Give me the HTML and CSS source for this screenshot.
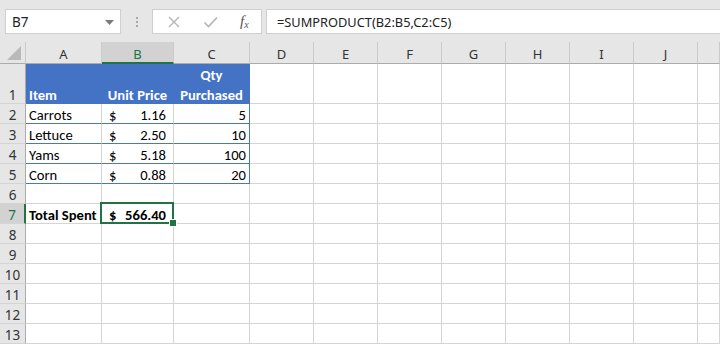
FILE: index.html
```html
<!DOCTYPE html>
<html>
<head>
<meta charset="utf-8">
<link rel="stylesheet" href="styles.css">
</head>
<body>
<div class="toolbar">
  <div class="namebox">
    <span class="nb-text">B7</span>
    <svg class="nb-arrow" width="9" height="5" viewBox="0 0 9 5"><path d="M0 0h9L4.5 5z" fill="#7a7a7a"/></svg>
  </div>
  <div class="grip"><i></i><i></i><i></i></div>
  <div class="fxbox">
    <svg width="14" height="14" viewBox="0 0 14 14"><path d="M2 2L12 12M12 2L2 12" stroke="#b4b4b4" stroke-width="1.4" fill="none"/></svg>
    <svg width="16" height="14" viewBox="0 0 16 14"><path d="M1.5 7.5L5.5 11.5L14 2.5" stroke="#b4b4b4" stroke-width="1.6" fill="none"/></svg>
    <span class="fx">f<sub>x</sub></span>
  </div>
  <div class="formula">=SUMPRODUCT(B2:B5,C2:C5)</div>
</div>
<div class="sheet">
  <div class="corner"><svg width="14" height="14" viewBox="0 0 14 14"><path d="M14 0V14H0z" fill="#b9b9b9"/></svg></div>
  <div class="ch">A</div><div class="ch sel">B</div><div class="ch">C</div><div class="ch">D</div><div class="ch">E</div><div class="ch">F</div><div class="ch">G</div><div class="ch">H</div><div class="ch">I</div><div class="ch">J</div><div class="ch"></div>

  <div class="rh">1</div>
  <div class="c th left"><span>Item</span></div><div class="c th center"><span>Unit Price</span></div><div class="c th center"><span>Qty<br>Purchased</span></div>
  <div class="c"></div><div class="c"></div><div class="c"></div><div class="c"></div><div class="c"></div><div class="c"></div><div class="c"></div><div class="c"></div>

  <div class="rh">2</div>
  <div class="c tb">Carrots</div><div class="c tb acc"><span>$</span><span>1.16</span></div><div class="c tb last num">5</div>
  <div class="c"></div><div class="c"></div><div class="c"></div><div class="c"></div><div class="c"></div><div class="c"></div><div class="c"></div><div class="c"></div>

  <div class="rh">3</div>
  <div class="c tb">Lettuce</div><div class="c tb acc"><span>$</span><span>2.50</span></div><div class="c tb last num">10</div>
  <div class="c"></div><div class="c"></div><div class="c"></div><div class="c"></div><div class="c"></div><div class="c"></div><div class="c"></div><div class="c"></div>

  <div class="rh">4</div>
  <div class="c tb">Yams</div><div class="c tb acc"><span>$</span><span>5.18</span></div><div class="c tb last num">100</div>
  <div class="c"></div><div class="c"></div><div class="c"></div><div class="c"></div><div class="c"></div><div class="c"></div><div class="c"></div><div class="c"></div>

  <div class="rh">5</div>
  <div class="c tb">Corn</div><div class="c tb acc"><span>$</span><span>0.88</span></div><div class="c tb last num">20</div>
  <div class="c"></div><div class="c"></div><div class="c"></div><div class="c"></div><div class="c"></div><div class="c"></div><div class="c"></div><div class="c"></div>

  <div class="rh">6</div>
  <div class="c"></div><div class="c"></div><div class="c"></div><div class="c"></div><div class="c"></div><div class="c"></div><div class="c"></div><div class="c"></div><div class="c"></div><div class="c"></div><div class="c"></div>

  <div class="rh sel">7</div>
  <div class="c bold">Total Spent</div><div class="c acc bold active"><span>$</span><span>566.40</span></div><div class="c"></div>
  <div class="c"></div><div class="c"></div><div class="c"></div><div class="c"></div><div class="c"></div><div class="c"></div><div class="c"></div><div class="c"></div>

  <div class="rh">8</div>
  <div class="c"></div><div class="c"></div><div class="c"></div><div class="c"></div><div class="c"></div><div class="c"></div><div class="c"></div><div class="c"></div><div class="c"></div><div class="c"></div><div class="c"></div>
  <div class="rh">9</div>
  <div class="c"></div><div class="c"></div><div class="c"></div><div class="c"></div><div class="c"></div><div class="c"></div><div class="c"></div><div class="c"></div><div class="c"></div><div class="c"></div><div class="c"></div>
  <div class="rh">10</div>
  <div class="c"></div><div class="c"></div><div class="c"></div><div class="c"></div><div class="c"></div><div class="c"></div><div class="c"></div><div class="c"></div><div class="c"></div><div class="c"></div><div class="c"></div>
  <div class="rh">11</div>
  <div class="c"></div><div class="c"></div><div class="c"></div><div class="c"></div><div class="c"></div><div class="c"></div><div class="c"></div><div class="c"></div><div class="c"></div><div class="c"></div><div class="c"></div>
  <div class="rh">12</div>
  <div class="c"></div><div class="c"></div><div class="c"></div><div class="c"></div><div class="c"></div><div class="c"></div><div class="c"></div><div class="c"></div><div class="c"></div><div class="c"></div><div class="c"></div>
  <div class="rh">13</div>
  <div class="c"></div><div class="c"></div><div class="c"></div><div class="c"></div><div class="c"></div><div class="c"></div><div class="c"></div><div class="c"></div><div class="c"></div><div class="c"></div><div class="c"></div>
</div>
</body>
</html>
```

FILE: styles.css
```css
* { box-sizing: border-box; }
html, body { margin: 0; padding: 0; background: #ffffff; }
body { width: 720px; height: 347px; overflow: hidden; }

.toolbar {
  height: 42px;
  background: #e6e6e6;
  display: flex;
  align-items: flex-start;
  padding-top: 9px;
  font-family: "Noto Sans", "Open Sans", sans-serif;
}
.namebox {
  margin-left: 5px;
  width: 116px;
  height: 25px;
  background: #fff;
  border: 1px solid #cfcfcf;
  display: flex;
  align-items: center;
  justify-content: space-between;
  padding: 0 6px 0 6px;
  font-size: 13.5px;
  color: #222;
}
.nb-arrow { margin-top: 1px; }
.grip {
  width: 31px;
  height: 25px;
  display: flex;
  flex-direction: column;
  align-items: center;
  justify-content: center;
  gap: 2px;
}
.grip i { display: block; width: 2px; height: 2px; background: #a9a9a9; }
.fxbox {
  width: 110px;
  height: 25px;
  background: #fff;
  border: 1px solid #cfcfcf;
  display: flex;
  align-items: center;
  padding-left: 14px;
  gap: 22px;
}
.fx {
  font-family: "Liberation Serif", serif;
  font-style: italic;
  font-size: 15px;
  color: #555;
  margin-left: -1px;
}
.fx sub { font-size: 10px; vertical-align: -2px; }
.formula {
  margin-left: 4px;
  flex: 1;
  height: 25px;
  background: #fff;
  border: 1px solid #cfcfcf;
  border-right: none;
  padding-left: 10px;
  display: flex;
  align-items: center;
  font-size: 12.8px;
  color: #222;
}

.sheet {
  display: grid;
  grid-template-columns: 26px 76px 72px 76px 64px 64px 64px 64px 64px 64px 64px 22px;
  grid-template-rows: 22px 40px repeat(12, 20px);
  font-family: "Carlito", "Lato", "Liberation Sans", sans-serif;
  font-size: 14.6px;
  color: #000;
}
.corner {
  background: #e6e6e6;
  border-right: 1px solid #cacaca;
  border-bottom: 1px solid #ababab;
  display: flex;
  align-items: flex-end;
  justify-content: flex-end;
  padding: 0 4px 3px 0;
}
.ch {
  background: #e6e6e6;
  border-right: 1px solid #cacaca;
  border-bottom: 1px solid #ababab;
  display: flex;
  align-items: center;
  justify-content: center;
  font-family: "Noto Sans", "Open Sans", sans-serif;
  font-size: 13px;
  color: #333;
  padding-top: 3px;
}
.ch:last-child { border-right: none; }
.ch.sel {
  background: #d2d2d2;
  color: #217346;
  border-bottom: 2px solid #217346;
  padding-top: 4px;
}
.rh {
  background: #e6e6e6;
  border-right: 1px solid #ababab;
  border-bottom: 1px solid #d4d4d4;
  display: flex;
  align-items: flex-end;
  justify-content: center;
  line-height: 15px;
  font-family: "Noto Sans", "Open Sans", sans-serif;
  font-size: 13.5px;
  color: #333;
}
.rh.sel {
  background: #d2d2d2;
  color: #217346;
  border-right: 2px solid #217346;
}
.c {
  border-right: 1px solid #d4d4d4;
  border-bottom: 1px solid #d4d4d4;
  display: flex;
  align-items: flex-end;
  padding: 0 3px 0 3px;
  white-space: nowrap;
  line-height: 15px;
}
.th {
  background: #4472c4;
  color: #fff;
  font-weight: bold;
  border-right-color: #4472c4;
  border-bottom: 0;
  line-height: 20px;
}
.th span { margin-bottom: -1px; }
.th.center { justify-content: center; text-align: center; }
.tb { border-bottom: 1px solid #4a76c6; }
.tb.last { border-right: 1px solid #4a76c6; }
.num { justify-content: flex-end; }
.acc { justify-content: space-between; padding: 0 7px 0 7px; }
.bold { font-weight: bold; }
.active { position: relative; }
.active::before {
  content: "";
  position: absolute;
  left: -2px;
  top: -2px;
  right: -1px;
  bottom: -1px;
  border: 2px solid #217346;
}
.active::after {
  content: "";
  position: absolute;
  right: -4px;
  bottom: -4px;
  width: 6px;
  height: 6px;
  background: #217346;
  border: 1px solid #fff;
}
```
